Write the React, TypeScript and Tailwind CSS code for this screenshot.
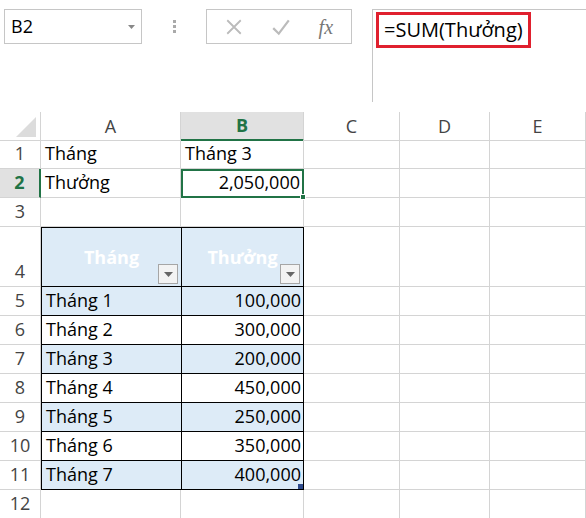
import React from "react";

const cols = "grid grid-cols-[41px_140px_123px_96px_90px_96px]";
const data = [
  ["Tháng 1", "100,000"],
  ["Tháng 2", "300,000"],
  ["Tháng 3", "200,000"],
  ["Tháng 4", "450,000"],
  ["Tháng 5", "250,000"],
  ["Tháng 6", "350,000"],
  ["Tháng 7", "400,000"],
];

const Drop = () => (
  <span className="absolute right-[3px] bottom-[2px] w-[20px] h-[20px] border border-[#a6a6a6] bg-[#f3f3f3] flex items-center justify-center">
    <svg width="9" height="5" viewBox="0 0 9 5"><path d="M0 0h9L4.5 5z" fill="#666" /></svg>
  </span>
);

const RowHead = ({ n, h = "h-[29px]", active = false }: { n: number; h?: string; active?: boolean }) => (
  <div className={`${h} border-b border-r border-[#d4d4d4] flex items-end justify-center pb-[1px] ${active ? "bg-[#e1e1e1] text-[#217346] font-bold border-r-[#217346] border-r-2" : "text-[#444]"}`}>
    {n}
  </div>
);

const Cell = ({ children, cls = "" }: { children?: React.ReactNode; cls?: string }) => (
  <div className={`h-[29px] border-b border-r border-[#d4d4d4] px-[4px] flex items-end pb-[1px] ${cls}`}>{children}</div>
);

export default function App() {
  return (
    <div className="w-[586px] h-[518px] overflow-hidden bg-white text-[18px] text-black" style={{ fontFamily: '"Open Sans", "Liberation Sans", sans-serif' }}>
      {/* formula bar */}
      <div className="h-[112px] flex pt-[9px]">
        <div className="ml-[4px] w-[138px] h-[35px] border border-[#c6c6c6] flex items-center justify-between px-[6px]">
          <span>B2</span>
          <svg width="7" height="4" viewBox="0 0 7 4"><path d="M0 0h7L3.5 4z" fill="#888" /></svg>
        </div>
        <div className="w-[64px] h-[35px] flex items-center justify-center">
          <div className="flex flex-col gap-[2px]">
            <span className="w-[3px] h-[3px] bg-[#aaa]" />
            <span className="w-[3px] h-[3px] bg-[#aaa]" />
            <span className="w-[3px] h-[3px] bg-[#aaa]" />
          </div>
        </div>
        <div className="w-[146px] h-[35px] border border-[#c6c6c6] flex items-center justify-around px-[4px]">
          <svg width="18" height="18" viewBox="0 0 16 16"><path d="M2 2l12 12M14 2L2 14" stroke="#bbb" strokeWidth="1.6" /></svg>
          <svg width="20" height="18" viewBox="0 0 18 16"><path d="M2 9l5 5L16 2" stroke="#bbb" strokeWidth="2" fill="none" /></svg>
          <span className="italic text-[#777] text-[20px]" style={{ fontFamily: '"Liberation Serif", serif' }}>fx</span>
        </div>
        <div className="ml-[20px] flex-1 h-[93px] border-l border-t border-[#c6c6c6] pt-[2px] pl-[3px]">
          <div className="inline-block border-[3px] border-[#e0202e] px-[5px] text-[20px] leading-[30px]">=SUM(Thưởng)</div>
        </div>
      </div>

      {/* column headers */}
      <div className={`${cols} h-[28px] bg-white`}>
        <div className="border-r border-b border-[#d4d4d4] relative overflow-hidden">
          <svg className="absolute right-[4px] bottom-[3px]" width="20" height="20" viewBox="0 0 20 20"><path d="M20 0V20H0z" fill="#dcdcdc" /></svg>
        </div>
        {["A", "B", "C", "D", "E"].map((c) => (
          <div key={c} className={`flex items-center justify-center border-r border-[#d4d4d4] ${c === "B" ? "bg-[#e1e1e1] text-[#217346] font-bold border-b-2 border-b-[#217346]" : "text-[#444] border-b"}`}>
            {c}
          </div>
        ))}
      </div>

      {/* rows */}
      <div className={cols}>
        <RowHead n={1} />
        <Cell>Tháng</Cell>
        <Cell>Tháng 3</Cell>
        <Cell /><Cell /><Cell />

        <RowHead n={2} active />
        <Cell>Thưởng</Cell>
        <div className="h-[29px] relative border-2 border-[#217346] flex items-end justify-end px-[2px]">
          2,050,000
          <span className="absolute -right-[4px] -bottom-[4px] w-[6px] h-[6px] bg-[#217346] border border-white" />
        </div>
        <Cell /><Cell /><Cell />

        <RowHead n={3} />
        <Cell /><Cell /><Cell /><Cell /><Cell />

        <RowHead n={4} h="h-[60px]" />
        <div className="h-[60px] relative bg-[#ddebf7] border border-black border-r-0 flex items-center justify-center font-bold text-white">
          Tháng
          <Drop />
        </div>
        <div className="h-[60px] relative bg-[#ddebf7] border border-black flex items-center justify-center font-bold text-white">
          Thưởng
          <Drop />
        </div>
        <div className="h-[60px] border-b border-r border-[#d4d4d4]" />
        <div className="h-[60px] border-b border-r border-[#d4d4d4]" />
        <div className="h-[60px] border-b border-r border-[#d4d4d4]" />

        {data.map(([m, v], i) => (
          <React.Fragment key={m}>
            <RowHead n={i + 5} />
            <div className={`h-[29px] border-l border-b border-black px-[4px] flex items-end pb-[1px] ${i % 2 === 0 ? "bg-[#ddebf7]" : "bg-white"}`}>{m}</div>
            <div className={`h-[29px] relative border-l border-r border-b border-black px-[2px] flex items-end justify-end pb-[1px] ${i % 2 === 0 ? "bg-[#ddebf7]" : "bg-white"}`}>
              {v}
              {i === 6 && <span className="absolute right-0 bottom-0 w-[5px] h-[5px] bg-[#2e4a8c]" />}
            </div>
            <Cell /><Cell /><Cell />
          </React.Fragment>
        ))}

        <RowHead n={12} />
        <Cell /><Cell /><Cell /><Cell /><Cell />
      </div>
    </div>
  );
}
